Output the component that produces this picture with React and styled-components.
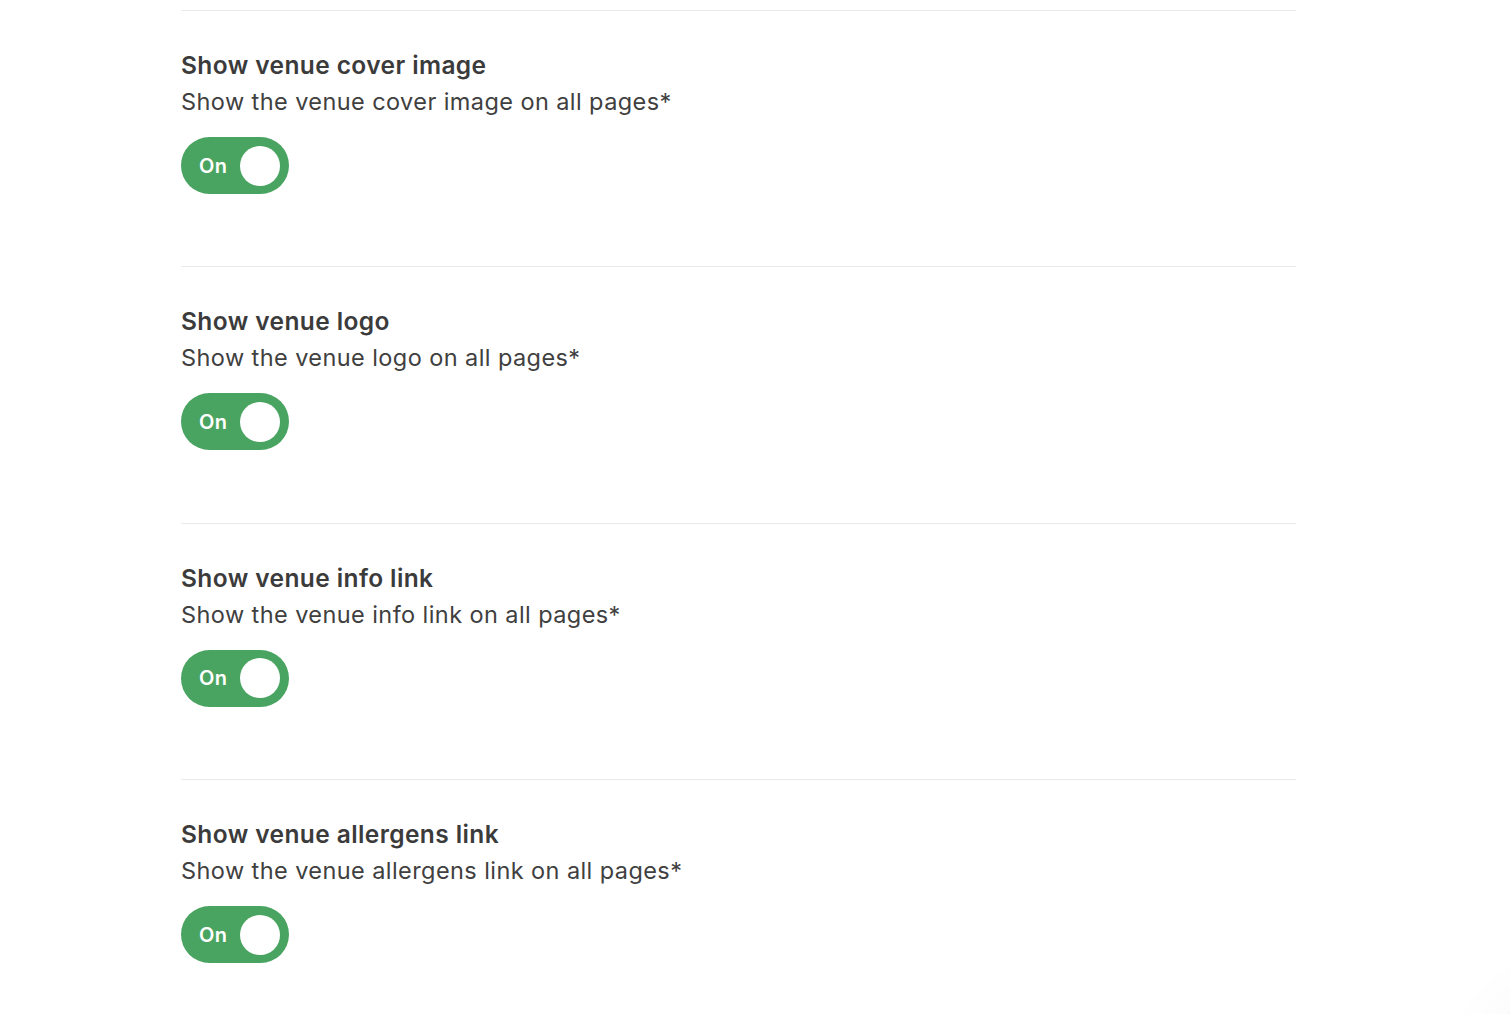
import React from "react";
import styled, { createGlobalStyle } from "styled-components";

const Global = createGlobalStyle`
  html, body { margin: 0; padding: 0; background: #ffffff; }
  body { font-family: Inter, "Open Sans", "Liberation Sans", sans-serif; overflow: hidden; }
`;

const Page = styled.main`
  padding: 10px 214px 0 181px;
  display: flex;
  flex-direction: column;
`;

const Section = styled.section`
  border-top: 1px solid #e9e9e9;
  padding: 36px 0 72.4px;
  display: flex;
  flex-direction: column;
  align-items: flex-start;
`;

const Title = styled.h3`
  margin: 0;
  font-size: 24.5px;
  line-height: 36px;
  font-weight: 600;
  color: #3b3b3b;
  letter-spacing: 0.4px;
`;

const Desc = styled.p`
  margin: 1px 0 0;
  font-size: 23.5px;
  line-height: 36px;
  font-weight: 400;
  color: #404040;
  letter-spacing: 0.42px;
`;

const Toggle = styled.button`
  margin-top: 17px;
  width: 108px;
  height: 57px;
  border: none;
  border-radius: 29px;
  background: ${(p) => (p.$on ? "#4aa461" : "#c9c9c9")};
  display: flex;
  align-items: center;
  justify-content: space-between;
  padding: 0 9px 0 18px;
  box-sizing: border-box;
  cursor: pointer;
  font-family: inherit;
`;

const ToggleLabel = styled.span`
  color: #ffffff;
  font-size: 20px;
  font-weight: 600;
  letter-spacing: 0.5px;
`;

const Knob = styled.span`
  width: 40px;
  height: 40px;
  border-radius: 50%;
  background: #ffffff;
`;

const CornerShadow = styled.div`
  position: fixed;
  right: -170px;
  bottom: -170px;
  width: 160px;
  height: 160px;
  border-radius: 50%;
  background: #ffffff;
  box-shadow: 0 0 90px 10px rgba(0, 0, 0, 0.12);
`;

const settings = [
  { title: "Show venue cover image", desc: "Show the venue cover image on all pages*" },
  { title: "Show venue logo", desc: "Show the venue logo on all pages*" },
  { title: "Show venue info link", desc: "Show the venue info link on all pages*" },
  { title: "Show venue allergens link", desc: "Show the venue allergens link on all pages*" },
];

export default function App() {
  return (
    <>
      <Global />
      <Page>
        {settings.map((s) => (
          <Section key={s.title}>
            <Title>{s.title}</Title>
            <Desc>{s.desc}</Desc>
            <Toggle $on>
              <ToggleLabel>On</ToggleLabel>
              <Knob />
            </Toggle>
          </Section>
        ))}
      </Page>
      <CornerShadow />
    </>
  );
}
